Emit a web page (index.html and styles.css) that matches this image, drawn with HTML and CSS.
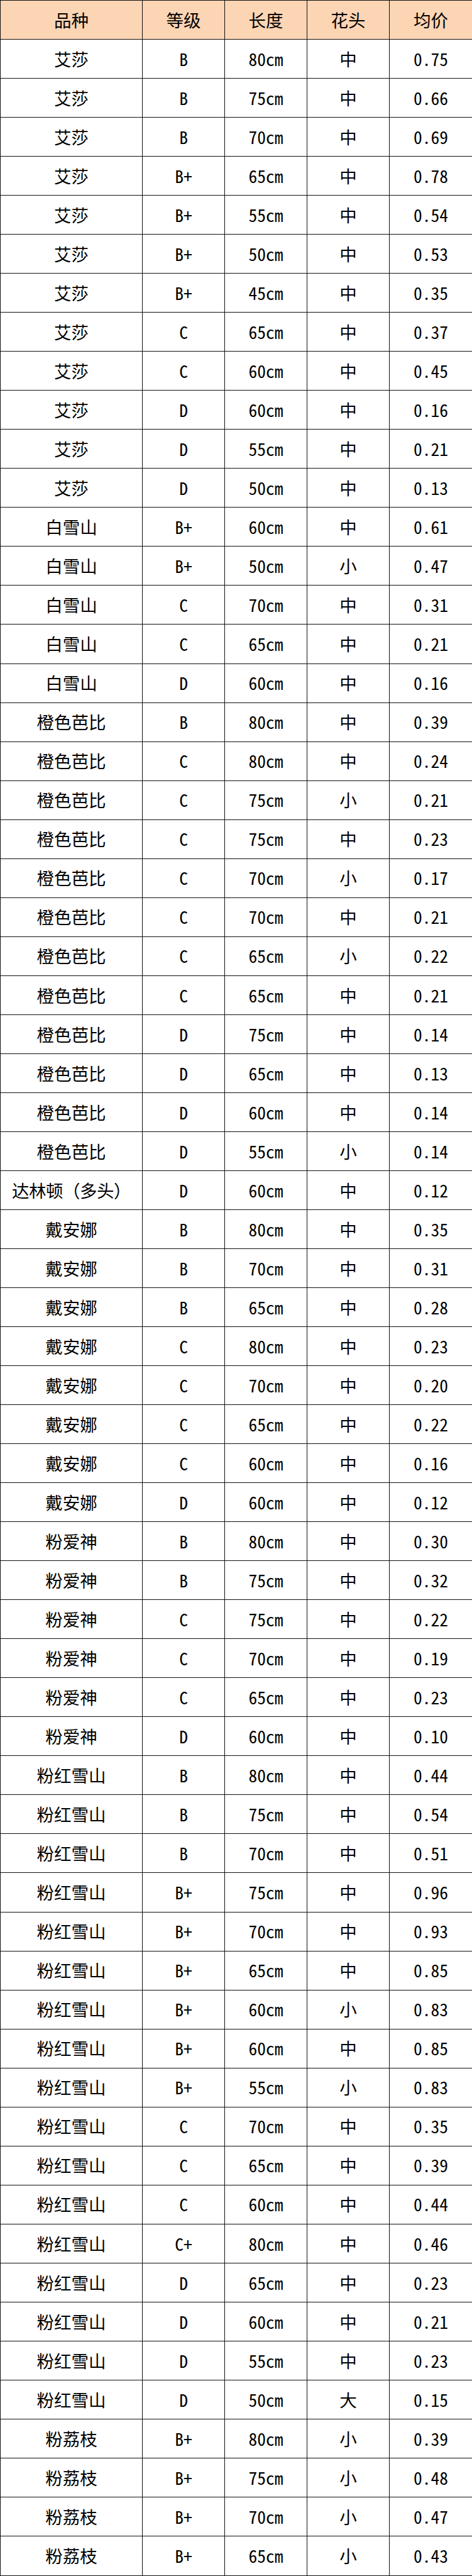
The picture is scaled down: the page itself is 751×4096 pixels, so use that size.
FILE: index.html
```html
<!DOCTYPE html>
<html lang="zh-CN">
<head>
<meta charset="utf-8">
<title>价格表</title>
<link rel="stylesheet" href="styles.css">
</head>
<body>
<table class="price-table">
<colgroup>
<col class="col-name"><col class="col-grade"><col class="col-len"><col class="col-head"><col class="col-price">
</colgroup>
<thead>
<tr class="head-row"><th>品种</th><th>等级</th><th>长度</th><th>花头</th><th>均价</th></tr>
</thead>
<tbody>
<tr><td>艾莎</td><td>B</td><td>80cm</td><td>中</td><td>0.75</td></tr>
<tr><td>艾莎</td><td>B</td><td>75cm</td><td>中</td><td>0.66</td></tr>
<tr><td>艾莎</td><td>B</td><td>70cm</td><td>中</td><td>0.69</td></tr>
<tr><td>艾莎</td><td>B+</td><td>65cm</td><td>中</td><td>0.78</td></tr>
<tr><td>艾莎</td><td>B+</td><td>55cm</td><td>中</td><td>0.54</td></tr>
<tr><td>艾莎</td><td>B+</td><td>50cm</td><td>中</td><td>0.53</td></tr>
<tr><td>艾莎</td><td>B+</td><td>45cm</td><td>中</td><td>0.35</td></tr>
<tr><td>艾莎</td><td>C</td><td>65cm</td><td>中</td><td>0.37</td></tr>
<tr><td>艾莎</td><td>C</td><td>60cm</td><td>中</td><td>0.45</td></tr>
<tr><td>艾莎</td><td>D</td><td>60cm</td><td>中</td><td>0.16</td></tr>
<tr><td>艾莎</td><td>D</td><td>55cm</td><td>中</td><td>0.21</td></tr>
<tr><td>艾莎</td><td>D</td><td>50cm</td><td>中</td><td>0.13</td></tr>
<tr><td>白雪山</td><td>B+</td><td>60cm</td><td>中</td><td>0.61</td></tr>
<tr><td>白雪山</td><td>B+</td><td>50cm</td><td>小</td><td>0.47</td></tr>
<tr><td>白雪山</td><td>C</td><td>70cm</td><td>中</td><td>0.31</td></tr>
<tr><td>白雪山</td><td>C</td><td>65cm</td><td>中</td><td>0.21</td></tr>
<tr><td>白雪山</td><td>D</td><td>60cm</td><td>中</td><td>0.16</td></tr>
<tr><td>橙色芭比</td><td>B</td><td>80cm</td><td>中</td><td>0.39</td></tr>
<tr><td>橙色芭比</td><td>C</td><td>80cm</td><td>中</td><td>0.24</td></tr>
<tr><td>橙色芭比</td><td>C</td><td>75cm</td><td>小</td><td>0.21</td></tr>
<tr><td>橙色芭比</td><td>C</td><td>75cm</td><td>中</td><td>0.23</td></tr>
<tr><td>橙色芭比</td><td>C</td><td>70cm</td><td>小</td><td>0.17</td></tr>
<tr><td>橙色芭比</td><td>C</td><td>70cm</td><td>中</td><td>0.21</td></tr>
<tr><td>橙色芭比</td><td>C</td><td>65cm</td><td>小</td><td>0.22</td></tr>
<tr><td>橙色芭比</td><td>C</td><td>65cm</td><td>中</td><td>0.21</td></tr>
<tr><td>橙色芭比</td><td>D</td><td>75cm</td><td>中</td><td>0.14</td></tr>
<tr><td>橙色芭比</td><td>D</td><td>65cm</td><td>中</td><td>0.13</td></tr>
<tr><td>橙色芭比</td><td>D</td><td>60cm</td><td>中</td><td>0.14</td></tr>
<tr><td>橙色芭比</td><td>D</td><td>55cm</td><td>小</td><td>0.14</td></tr>
<tr><td class="tight">达林顿（多头）</td><td>D</td><td>60cm</td><td>中</td><td>0.12</td></tr>
<tr><td>戴安娜</td><td>B</td><td>80cm</td><td>中</td><td>0.35</td></tr>
<tr><td>戴安娜</td><td>B</td><td>70cm</td><td>中</td><td>0.31</td></tr>
<tr><td>戴安娜</td><td>B</td><td>65cm</td><td>中</td><td>0.28</td></tr>
<tr><td>戴安娜</td><td>C</td><td>80cm</td><td>中</td><td>0.23</td></tr>
<tr><td>戴安娜</td><td>C</td><td>70cm</td><td>中</td><td>0.20</td></tr>
<tr><td>戴安娜</td><td>C</td><td>65cm</td><td>中</td><td>0.22</td></tr>
<tr><td>戴安娜</td><td>C</td><td>60cm</td><td>中</td><td>0.16</td></tr>
<tr><td>戴安娜</td><td>D</td><td>60cm</td><td>中</td><td>0.12</td></tr>
<tr><td>粉爱神</td><td>B</td><td>80cm</td><td>中</td><td>0.30</td></tr>
<tr><td>粉爱神</td><td>B</td><td>75cm</td><td>中</td><td>0.32</td></tr>
<tr><td>粉爱神</td><td>C</td><td>75cm</td><td>中</td><td>0.22</td></tr>
<tr><td>粉爱神</td><td>C</td><td>70cm</td><td>中</td><td>0.19</td></tr>
<tr><td>粉爱神</td><td>C</td><td>65cm</td><td>中</td><td>0.23</td></tr>
<tr><td>粉爱神</td><td>D</td><td>60cm</td><td>中</td><td>0.10</td></tr>
<tr><td>粉红雪山</td><td>B</td><td>80cm</td><td>中</td><td>0.44</td></tr>
<tr><td>粉红雪山</td><td>B</td><td>75cm</td><td>中</td><td>0.54</td></tr>
<tr><td>粉红雪山</td><td>B</td><td>70cm</td><td>中</td><td>0.51</td></tr>
<tr><td>粉红雪山</td><td>B+</td><td>75cm</td><td>中</td><td>0.96</td></tr>
<tr><td>粉红雪山</td><td>B+</td><td>70cm</td><td>中</td><td>0.93</td></tr>
<tr><td>粉红雪山</td><td>B+</td><td>65cm</td><td>中</td><td>0.85</td></tr>
<tr><td>粉红雪山</td><td>B+</td><td>60cm</td><td>小</td><td>0.83</td></tr>
<tr><td>粉红雪山</td><td>B+</td><td>60cm</td><td>中</td><td>0.85</td></tr>
<tr><td>粉红雪山</td><td>B+</td><td>55cm</td><td>小</td><td>0.83</td></tr>
<tr><td>粉红雪山</td><td>C</td><td>70cm</td><td>中</td><td>0.35</td></tr>
<tr><td>粉红雪山</td><td>C</td><td>65cm</td><td>中</td><td>0.39</td></tr>
<tr><td>粉红雪山</td><td>C</td><td>60cm</td><td>中</td><td>0.44</td></tr>
<tr><td>粉红雪山</td><td>C+</td><td>80cm</td><td>中</td><td>0.46</td></tr>
<tr><td>粉红雪山</td><td>D</td><td>65cm</td><td>中</td><td>0.23</td></tr>
<tr><td>粉红雪山</td><td>D</td><td>60cm</td><td>中</td><td>0.21</td></tr>
<tr><td>粉红雪山</td><td>D</td><td>55cm</td><td>中</td><td>0.23</td></tr>
<tr><td>粉红雪山</td><td>D</td><td>50cm</td><td>大</td><td>0.15</td></tr>
<tr><td>粉荔枝</td><td>B+</td><td>80cm</td><td>小</td><td>0.39</td></tr>
<tr><td>粉荔枝</td><td>B+</td><td>75cm</td><td>小</td><td>0.48</td></tr>
<tr><td>粉荔枝</td><td>B+</td><td>70cm</td><td>小</td><td>0.47</td></tr>
<tr><td>粉荔枝</td><td>B+</td><td>65cm</td><td>小</td><td>0.43</td></tr>
</tbody>
</table>
</body>
</html>
```

FILE: styles.css
```css
html, body {
  margin: 0;
  padding: 0;
  background: #ffffff;
}

.price-table {
  width: 751px;
  height: 4096px;
  border-collapse: collapse;
  table-layout: fixed;
  font-family: "Noto Sans Mono CJK SC", "Noto Sans CJK SC", sans-serif;
  font-size: 27.5px;
  color: #000;
}

.col-name { width: 226px; }
.col-grade { width: 131px; }
.col-len { width: 131px; }
.col-head { width: 131px; }
.col-price { width: 132px; }

.price-table tr {
  height: 62px;
}

.price-table th,
.price-table td {
  border: 1.5px solid #111;
  text-align: center;
  vertical-align: middle;
  padding: 0;
  font-weight: 400;
  line-height: 1;
  white-space: nowrap;
  overflow: hidden;
}

.head-row th {
  background: #fcd5b4;
}

.price-table td.tight {
  letter-spacing: -0.5px;
}
```
